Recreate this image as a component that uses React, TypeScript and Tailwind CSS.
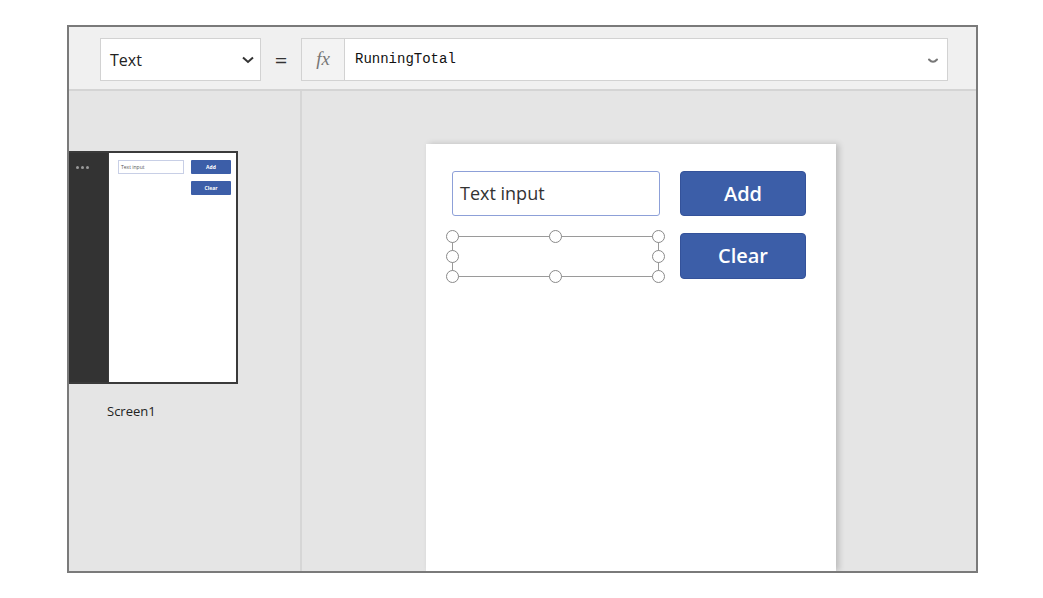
import React from "react"

const sans = { fontFamily: '"Open Sans", "Noto Sans", sans-serif' }

function Handle({ className }: { className: string }) {
  return <span className={`absolute w-[13px] h-[13px] rounded-full bg-white border-[1.5px] border-[#8a8a8a] ${className}`} />
}

function Thumbnail() {
  return (
    <div className="flex w-[169px] h-[233px] border-y-2 border-r-2 border-[#3a3a3a] bg-white">
      <div className="w-[39px] bg-[#333333] flex gap-[2px] pl-[7px] pt-[13px]">
        <span className="w-[3px] h-[3px] rounded-full bg-[#9a9a9a]" />
        <span className="w-[3px] h-[3px] rounded-full bg-[#9a9a9a]" />
        <span className="w-[3px] h-[3px] rounded-full bg-[#9a9a9a]" />
      </div>
      <div className="flex gap-[7px] pl-[9px] pt-[7px] border-l border-[#3a3a3a]">
        <div className="w-[66px] h-[14px] border border-[#c8cfe6] text-[5px] text-[#555] pl-[2px] leading-[12px]">Text input</div>
        <div className="flex flex-col gap-[7px]">
          <div className="w-[40px] h-[14px] bg-[#3c5ea8] rounded-[1px] text-[5px] font-bold text-white text-center leading-[14px]">Add</div>
          <div className="w-[40px] h-[14px] bg-[#3c5ea8] rounded-[1px] text-[5px] font-bold text-white text-center leading-[14px]">Clear</div>
        </div>
      </div>
    </div>
  )
}

export default function App() {
  return (
    <div className="w-[1043px] h-[598px] bg-white pt-[25px] pl-[67px]" style={sans}>
      <div className="w-[911px] h-[548px] border-2 border-[#7a7a7a] flex flex-col overflow-hidden">
        {/* formula bar */}
        <div className="h-[64px] shrink-0 bg-[#f0f0f0] border-b-2 border-[#d4d4d4] flex items-start pt-[11px] pl-[31px]">
          <div className="w-[161px] h-[43px] bg-white border border-[#d2d2d2] flex items-center justify-between pl-[9px] pr-[4px]">
            <span className="text-[16px] text-[#222]">Text</span>
            <svg width="14" height="10" viewBox="0 0 14 10" className="mr-[1px]">
              <path d="M2 2.5 L7 7 L12 2.5" fill="none" stroke="#333" strokeWidth="2" />
            </svg>
          </div>
          <span className="w-[40px] h-[43px] flex items-center justify-center text-[22px] text-[#333]">=</span>
          <div className="w-[647px] h-[43px] bg-white border border-[#d2d2d2] flex items-center">
            <div className="w-[43px] h-full bg-[#f3f3f3] border-r border-[#d2d2d2] flex items-center justify-center">
              <span className="italic text-[19px] text-[#777]" style={{ fontFamily: '"Liberation Serif", serif' }}>fx</span>
            </div>
            <span className="ml-[10px] text-[14px] text-[#111] flex-1" style={{ fontFamily: '"Liberation Mono", monospace' }}>RunningTotal</span>
            <svg width="12" height="8" viewBox="0 0 12 8" className="mr-[8px] mt-[2px]">
              <path d="M2 2.5 Q6 7 10 2.5" fill="none" stroke="#777" strokeWidth="2" strokeLinecap="round" />
            </svg>
          </div>
        </div>

        {/* body */}
        <div className="flex flex-1 bg-[#e5e5e5]">
          <div className="w-[233px] shrink-0 border-r-2 border-[#d6d6d6] pt-[60px]">
            <Thumbnail />
            <p className="text-[13px] text-[#222] mt-[18px] ml-[38px]">Screen1</p>
          </div>

          <div className="flex-1 pl-[124px] pt-[53px]">
            <div className="w-[410px] h-full bg-white shadow-[3px_0_6px_rgba(0,0,0,0.18)] flex gap-[20px] pl-[26px] pt-[27px]">
              <div className="flex flex-col">
                <div className="w-[208px] h-[45px] border-[1.5px] border-[#8da0d8] rounded-[3px] flex items-center pl-[7px] text-[18px] text-[#333]">
                  Text input
                </div>
                <div className="relative w-[207px] h-[41px] mt-[20px] border-[1.5px] border-[#9a9a9a]">
                  <Handle className="-left-[7px] -top-[7px]" />
                  <Handle className="left-[96px] -top-[7px]" />
                  <Handle className="-right-[7px] -top-[7px]" />
                  <Handle className="-left-[7px] top-[13px]" />
                  <Handle className="-right-[7px] top-[13px]" />
                  <Handle className="-left-[7px] -bottom-[7px]" />
                  <Handle className="left-[96px] -bottom-[7px]" />
                  <Handle className="-right-[7px] -bottom-[7px]" />
                </div>
              </div>
              <div className="flex flex-col gap-[17px]">
                <div className="w-[126px] h-[45px] bg-[#3c5ea8] rounded-[4px] border border-[#34529a] flex items-center justify-center text-white text-[20px] font-semibold">Add</div>
                <div className="w-[126px] h-[46px] bg-[#3c5ea8] rounded-[4px] border border-[#34529a] flex items-center justify-center text-white text-[20px] font-semibold">Clear</div>
              </div>
            </div>
          </div>
        </div>
      </div>
    </div>
  )
}
